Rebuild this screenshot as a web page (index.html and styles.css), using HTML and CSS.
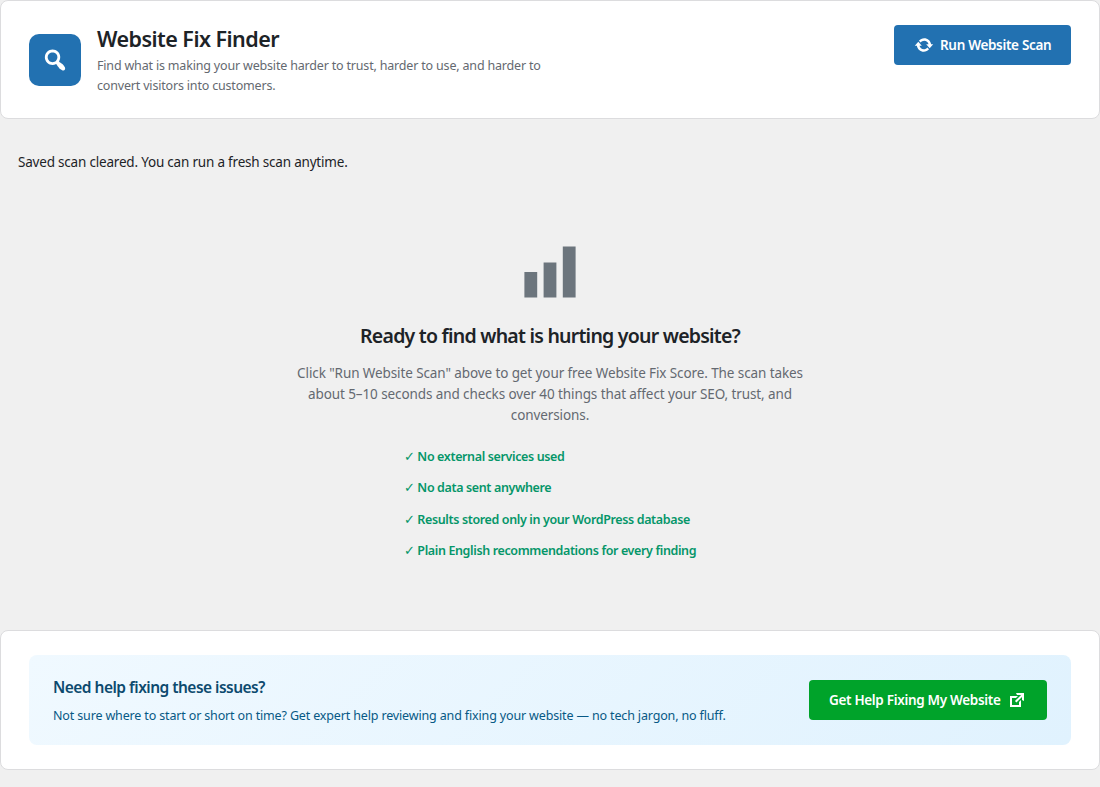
FILE: index.html
```html
<!DOCTYPE html>
<html lang="en">
<head>
<meta charset="utf-8">
<title>Website Fix Finder</title>
<link rel="stylesheet" href="styles.css">
</head>
<body>
<header class="panel header">
  <div class="brand">
    <div class="logo"><svg class="icon-search" viewBox="0 0 20 20"><path d="M12.14 4.18c1.87 1.87 2.11 4.75.72 6.89.12.1.22.21.36.31.2.16.47.36.81.59.34.24.56.39.66.47.42.31.73.57.94.78.32.32.6.65.84 1 .25.35.44.69.59 1.04.14.35.21.68.18 1-.02.32-.14.59-.36.81s-.49.34-.81.36c-.31.02-.65-.04-.99-.19-.35-.14-.7-.34-1.04-.59-.35-.24-.68-.52-1-.84-.21-.21-.47-.52-.77-.93-.1-.13-.25-.35-.47-.66-.22-.32-.4-.57-.56-.78-.16-.2-.29-.35-.44-.5-2.07 1.09-4.69.76-6.44-.98-2.14-2.15-2.14-5.64 0-7.78 2.15-2.15 5.63-2.15 7.78 0zm-1.41 6.36c1.36-1.37 1.36-3.58 0-4.95-1.37-1.37-3.59-1.37-4.95 0-1.37 1.37-1.37 3.58 0 4.95 1.36 1.37 3.58 1.37 4.95 0z"/></svg></div>
    <div>
      <h1 class="title">Website Fix Finder</h1>
      <p class="subtitle">Find what is making your website harder to trust, harder to use, and harder to convert visitors into customers.</p>
    </div>
  </div>
  <button class="btn btn-scan"><svg class="icon" viewBox="0 0 20 20"><path d="M10.2 3.28c3.53 0 6.43 2.61 6.92 6h2.08l-3.5 4-3.5-4h2.32c-.45-1.97-2.21-3.45-4.32-3.45-1.45 0-2.73.71-3.54 1.78L4.95 5.66C6.23 4.2 8.11 3.28 10.2 3.28zm-.4 13.44c-3.52 0-6.43-2.61-6.92-6H.8l3.5-4c1.17 1.33 2.33 2.67 3.5 4H5.48c.45 1.97 2.21 3.45 4.32 3.45 1.45 0 2.73-.71 3.54-1.78l1.71 1.95c-1.28 1.46-3.15 2.38-5.25 2.38z"/></svg>Run Website Scan</button>
</header>
<p class="notice">Saved scan cleared. You can run a fresh scan anytime.</p>
<main class="empty">
  <svg class="icon-chart" viewBox="0 0 20 20"><path d="M18 18V2h-4v16h4zm-6 0V7H8v11h4zm-6 0v-8H2v8h4z"/></svg>
  <h2 class="empty-title">Ready to find what is hurting your website?</h2>
  <p class="empty-text">Click "Run Website Scan" above to get your free Website Fix Score. The scan takes about 5–10 seconds and checks over 40 things that affect your SEO, trust, and conversions.</p>
  <ul class="checks">
    <li><span class="tick">✓</span> No external services used</li>
    <li><span class="tick">✓</span> No data sent anywhere</li>
    <li><span class="tick">✓</span> Results stored only in your WordPress database</li>
    <li><span class="tick">✓</span> Plain English recommendations for every finding</li>
  </ul>
</main>
<footer class="panel footer">
  <div class="cta">
    <div>
      <h3 class="cta-title">Need help fixing these issues?</h3>
      <p class="cta-text">Not sure where to start or short on time? Get expert help reviewing and fixing your website — no tech jargon, no fluff.</p>
    </div>
    <a class="btn btn-help">Get Help Fixing My Website<svg class="icon" viewBox="0 0 20 20"><path d="M9 3h8v8l-2-1V6.92l-5.6 5.59-1.41-1.41L14.08 5H10zm3 12v-3l2-2v7H3V6h8L9 8H5v7h7z"/></svg></a>
  </div>
</footer>
</body>
</html>
```
FILE: styles.css
```css
* { box-sizing: border-box; }
body {
  margin: 0;
  background: #f0f0f0;
  color: #1d2327;
  font-family: "Noto Sans", sans-serif;
  font-size: 13.5px;
  letter-spacing: -0.2px;
}
h1, h2, h3, p, ul { margin: 0; padding: 0; }
svg { display: block; flex: none; fill: currentColor; }
.panel { background: #fff; border: 1px solid #dcdcde; border-radius: 8px; padding: 24px 28px; }
.header { display: flex; justify-content: space-between; align-items: flex-start; height: 119px; }
.brand { display: flex; align-items: center; gap: 16px; height: 70px; }
.logo { display: grid; place-items: center; width: 52px; height: 52px; border-radius: 10px; background: #2271b1; color: #fff; flex: none; }
.icon-search { width: 28px; height: 28px; }
.title { font-size: 21.5px; line-height: 28px; font-weight: 600; letter-spacing: -0.54px; }
.subtitle { width: 460px; margin: 3px 0 -1px; font-size: 12.5px; line-height: 20px; letter-spacing: -0.18px; color: #646970; }
.btn { display: flex; align-items: center; gap: 6px; height: 40px; padding: 0 20px; border: 0; border-radius: 4px; color: #fff; font: 600 13.5px/20px "Noto Sans", sans-serif; letter-spacing: -0.32px; white-space: nowrap; flex: none; }
.btn-scan { width: 177px; background: #2271b1; }
.btn-help { width: 238px; justify-content: space-between; background: #00a32a; }
.icon { width: 20px; height: 20px; }
.notice { margin: 32px 18px 0; line-height: 22px; }
.empty { display: flex; flex-direction: column; align-items: center; padding-top: 67px; height: 457px; text-align: center; }
.icon-chart { width: 64px; height: 64px; color: #6c757d; }
.empty-title { margin-top: 18px; font-size: 19.5px; line-height: 28px; font-weight: 600; letter-spacing: -0.76px; }
.empty-text { width: 520px; margin-top: 13px; line-height: 21px; letter-spacing: -0.1px; color: #646970; }
.checks { margin-top: 20.5px; list-style: none; text-align: left; color: #059669; font-size: 12.5px; font-weight: 600; line-height: 19.5px; letter-spacing: -0.37px; display: grid; gap: 12px; }
.tick { font-weight: 400; }
.footer { height: 140px; }
.cta { display: flex; align-items: center; justify-content: space-between; height: 90px; padding: 0 24px; border-radius: 8px; background: linear-gradient(135deg, #f0f9ff, #e0f2fe); }
.cta-title { font-size: 15.5px; line-height: 24px; font-weight: 600; letter-spacing: -0.52px; color: #0c4a6e; }
.cta-text { margin: 7px 0 -1px; font-size: 12.5px; line-height: 20px; letter-spacing: -0.15px; color: #075985; }
```
